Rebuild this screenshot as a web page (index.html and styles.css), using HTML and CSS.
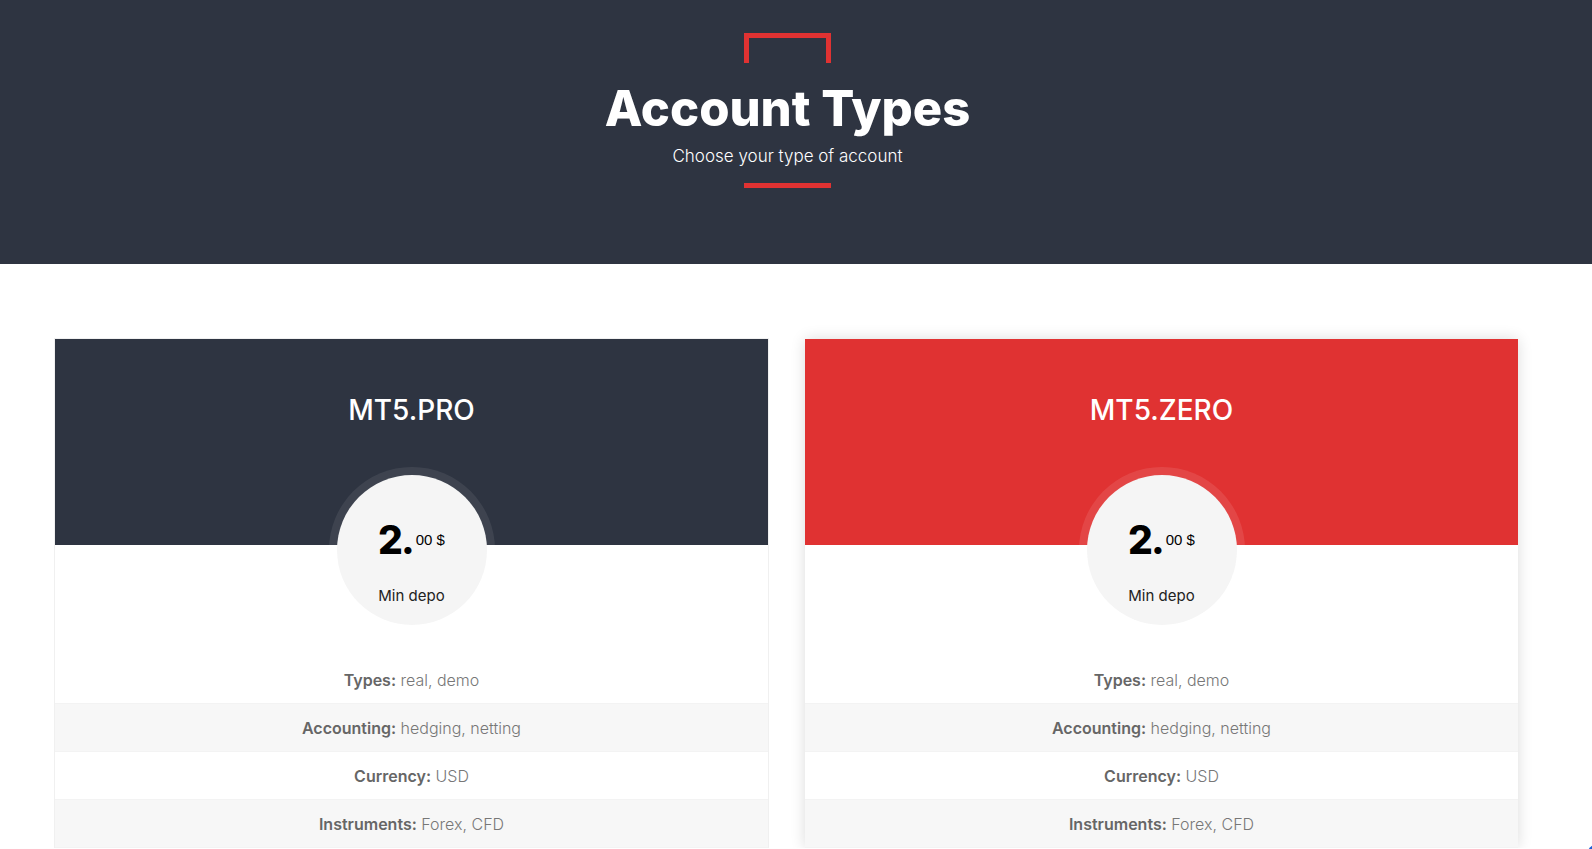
FILE: index.html
```html
<!DOCTYPE html>
<html lang="en">
<head>
  <meta charset="UTF-8">
  <meta name="viewport" content="width=device-width, initial-scale=1.0">
  <title>Account Types</title>
  <link rel="stylesheet" href="styles.css">
</head>
<body>

<section class="hero">
  <div class="bracket-top"></div>
  <h1>Account Types</h1>
  <p>Choose your type of account</p>
  <div class="bracket-bottom"></div>
</section>

<section class="plans">
  <div class="plan">
    <div class="plan-head">
      <h2>MT5.PRO</h2>
    </div>
    <div class="price-circle">
      <div class="price">2.<span class="cents">00 $</span></div>
      <div class="price-label">Min depo</div>
    </div>
    <ul class="features">
      <li><b>Types:</b> real, demo</li>
      <li><b>Accounting:</b> hedging, netting</li>
      <li><b>Currency:</b> USD</li>
      <li><b>Instruments:</b> Forex, CFD</li>
    </ul>
  </div>

  <div class="plan plan-active">
    <div class="plan-head">
      <h2>MT5.ZERO</h2>
    </div>
    <div class="price-circle">
      <div class="price">2.<span class="cents">00 $</span></div>
      <div class="price-label">Min depo</div>
    </div>
    <ul class="features">
      <li><b>Types:</b> real, demo</li>
      <li><b>Accounting:</b> hedging, netting</li>
      <li><b>Currency:</b> USD</li>
      <li><b>Instruments:</b> Forex, CFD</li>
    </ul>
  </div>
</section>

<div class="chat-bubble"></div>

</body>
</html>
```

FILE: styles.css
```css
body {
  margin: 0;
  font-family: Inter, "Open Sans", sans-serif;
  background: #fff;
  overflow: hidden;
}

.hero {
  height: 264px;
  box-sizing: border-box;
  padding: 33px 17px 0 0;
  background-color: #2e3441;
  display: flex;
  flex-direction: column;
  align-items: center;
  color: #fff;
}

.bracket-top {
  width: 77px;
  height: 25px;
  border: 5px solid #e03232;
  border-bottom: none;
}

.hero h1 {
  margin: 21px 0 0;
  font-size: 49px;
  line-height: 1;
  font-weight: 800;
}

.hero p {
  margin: 13px 0 0;
  font-size: 17px;
  line-height: 1.2;
  font-weight: 300;
}

.bracket-bottom {
  width: 87px;
  height: 5px;
  margin-top: 17px;
  background-color: #e03232;
}

.plans {
  display: grid;
  grid-template-columns: 713px 713px;
  gap: 37px;
  margin: 75px 0 0 55px;
}

.plan {
  background: #fff;
  box-shadow: 0 0 0 1px #f0f0f0;
}

.plan-active {
  box-shadow: 0 0 14px rgba(0, 0, 0, 0.14);
}

.plan-head {
  height: 206px;
  box-sizing: border-box;
  padding-top: 55px;
  background-color: #2e3441;
  text-align: center;
}

.plan-active .plan-head {
  background-color: #e03232;
}

.plan-head h2 {
  margin: 0;
  color: #fff;
  font-size: 28px;
  line-height: 1.2;
  font-weight: 500;
}

.price-circle {
  width: 150px;
  height: 150px;
  margin: -78px auto 0;
  border: 8px solid rgba(255, 255, 255, 0.08);
  border-radius: 50%;
  background-color: #f5f5f5;
  background-clip: padding-box;
  display: flex;
  flex-direction: column;
  align-items: center;
}

.plan-active .price-circle {
  border-color: rgba(255, 255, 255, 0.1);
}

.price {
  margin-top: 45px;
  font-size: 39px;
  line-height: 40px;
  font-weight: 800;
  color: #000;
  letter-spacing: -2px;
}

.cents {
  font-family: "Liberation Sans", Arial, sans-serif;
  font-size: 15px;
  font-weight: 400;
  letter-spacing: 0;
  vertical-align: 9px;
  margin-left: 3px;
}

.price-label {
  margin-top: 27px;
  font-size: 15px;
  line-height: 18px;
  color: #222;
}

.features {
  list-style: none;
  margin: 23px 0 0;
  padding: 0;
}

.features li {
  height: 48px;
  line-height: 48px;
  text-align: center;
  font-size: 16px;
  font-weight: 300;
  color: #777;
  border-bottom: 1px solid #f3f3f3;
  box-sizing: border-box;
}

.features li:nth-child(even) {
  background-color: #f7f7f7;
}

.features b {
  font-weight: 600;
  color: #666;
}

.chat-bubble {
  position: fixed;
  right: -46px;
  bottom: -46px;
  width: 56px;
  height: 56px;
  border-radius: 50%;
  background-color: #1f5fd6;
}
```
